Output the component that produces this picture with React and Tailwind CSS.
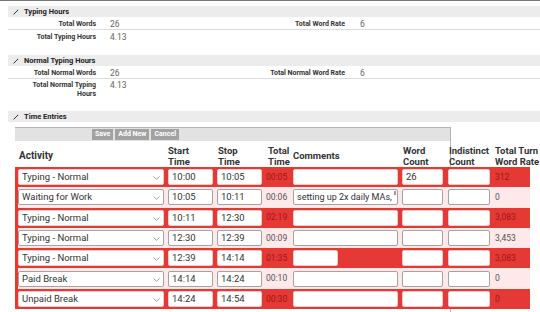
import React from 'react';

const font = { fontFamily: 'Roboto, "Liberation Sans", sans-serif' };

const entries = [
  { act: 'Typing - Normal', start: '10:00', stop: '10:05', total: '00:05', comment: '', word: '26', ind: '', rate: '312', hot: true },
  { act: 'Waiting for Work', start: '10:05', stop: '10:11', total: '00:06', comment: 'setting up 2x daily MAs,', word: '', ind: '', rate: '0', hot: false, grip: true },
  { act: 'Typing - Normal', start: '10:11', stop: '12:30', total: '02:19', comment: '', word: '', ind: '', rate: '3,083', hot: true },
  { act: 'Typing - Normal', start: '12:30', stop: '12:39', total: '00:09', comment: '', word: '', ind: '', rate: '3,453', hot: false },
  { act: 'Typing - Normal', start: '12:39', stop: '14:14', total: '01:35', comment: '', word: '', ind: '', rate: '3,083', hot: true, shortComment: true },
  { act: 'Paid Break', start: '14:14', stop: '14:24', total: '00:10', comment: '', word: '', ind: '', rate: '0', hot: false },
  { act: 'Unpaid Break', start: '14:24', stop: '14:54', total: '00:30', comment: '', word: '', ind: '', rate: '0', hot: true },
];

function Pencil() {
  return (
    <svg width="6" height="6" viewBox="0 0 6 6" className="shrink-0">
      <path d="M0.8 5.2 L4.6 1.4" stroke="#333" strokeWidth="1" strokeLinecap="round" />
      <path d="M4.2 1.2 L5 0.6 L5.4 1 L4.8 1.8 Z" fill="#333" />
    </svg>
  );
}

function SectionHeader({ title }) {
  return (
    <div className="ml-[8px] h-[11px] bg-[#ececec] flex items-center gap-[5px] pl-[5px]">
      <Pencil />
      <span className="text-[7.5px] font-bold text-[#222] leading-none">{title}</span>
    </div>
  );
}

function InfoRow({ label1, value1, label2, value2, line, tall }) {
  return (
    <div className={`ml-[8px] flex items-start ${line ? 'border-b border-[#dcdcdc]' : ''} ${tall ? 'pt-[2px] h-[21px]' : 'pt-[3px] h-[13px]'}`}>
      <div className="w-[88px] shrink-0 pl-[20px] text-right text-[7px] font-bold text-[#333] leading-[9px]">{label1}</div>
      <div className="w-[137px] shrink-0 pl-[14px] text-[8.5px] text-[#666] leading-[9px]">{value1}</div>
      <div className="w-[112px] shrink-0 text-right text-[7px] font-bold text-[#333] leading-[9px]">{label2}</div>
      <div className="pl-[15px] text-[8.5px] text-[#666] leading-[9px]">{value2}</div>
    </div>
  );
}

function Box({ w, value, hot, ml, children }) {
  return (
    <div
      className={`relative shrink-0 h-[16px] bg-white rounded-[2px] border ${hot ? 'border-[#f6c9c9]' : 'border-[#a3a3a3]'} flex items-center px-[3px] text-[9.5px] text-[#333] whitespace-nowrap overflow-hidden ${w} ${ml}`}
    >
      {value}
      {children}
    </div>
  );
}

function Row({ e }) {
  const hot = e.hot;
  return (
    <div className={`h-[20.3px] flex items-center border-l-[3px] border-[#e53935] ${hot ? 'bg-[#e53935]' : 'bg-[#fde8ea]'}`}>
      <Box w="w-[146px]" value={e.act} hot={hot} ml="ml-0">
        <svg width="7" height="4" viewBox="0 0 7 4" className="absolute right-[3px] top-[6px]">
          <path d="M0.5 0.5 L3.5 3.3 L6.5 0.5" fill="none" stroke="#888" strokeWidth="0.8" />
        </svg>
      </Box>
      <Box w="w-[45px]" value={e.start} hot={hot} ml="ml-[4px]" />
      <Box w="w-[45px]" value={e.stop} hot={hot} ml="ml-[4px]" />
      <div className={`w-[26px] shrink-0 ml-[4px] text-[8.5px] ${hot ? 'text-[#9e1818]' : 'text-[#555]'}`}>{e.total}</div>
      {e.shortComment ? (
        <div className="w-[105px] shrink-0 ml-[1px]">
          <Box w="w-[45px]" value="" hot={hot} ml="ml-0" />
        </div>
      ) : (
        <Box w="w-[105px]" value={<span className="text-[9px]">{e.comment}</span>} hot={hot} ml="ml-[1px]">
          {e.grip && <div className="absolute right-[1px] top-[1px] w-[2px] h-[4px] bg-[#999]" />}
        </Box>
      )}
      <Box w="w-[41px]" value={e.word} hot={hot} ml="ml-[4px]" />
      <Box w="w-[42px]" value={e.ind} hot={hot} ml="ml-[5px]" />
      <div className={`ml-[5px] text-[8.5px] ${hot ? 'text-[#9e1818]' : 'text-[#555]'}`}>{e.rate}</div>
    </div>
  );
}

function HeadCell({ lines, w }) {
  return (
    <div className={`${w} shrink-0 text-[9.5px] font-bold text-[#333] leading-[11px] whitespace-nowrap`}>
      {lines.map((l) => (
        <div key={l}>{l}</div>
      ))}
    </div>
  );
}

export default function App() {
  return (
    <div className="w-[540px] h-[312px] overflow-hidden bg-white" style={font}>
      <div className="h-[1px] bg-[#777]" />

      <div className="mt-[5px]">
        <SectionHeader title="Typing Hours" />
        <InfoRow label1="Total Words" value1="26" label2="Total Word Rate" value2="6" line />
        <InfoRow label1="Total Typing Hours" value1="4.13" />
      </div>

      <div className="mt-[12px]">
        <SectionHeader title="Normal Typing Hours" />
        <InfoRow label1="Total Normal Words" value1="26" label2="Total Normal Word Rate" value2="6" line />
        <InfoRow label1="Total Normal Typing Hours" value1="4.13" tall />
      </div>

      <div className="mt-[11px]">
        <SectionHeader title="Time Entries" />
      </div>

      <div className="mt-[5px] ml-[15px] w-[436px] h-[200px] border-t border-r border-[#b5b5b5]">
        <div className="h-[13px] bg-[#e2e2e2] flex items-center gap-[2px] pl-[77px]">
          <button className="h-[11px] px-[3px] bg-[#a2a2a2] text-white text-[7px] font-bold leading-none">Save</button>
          <button className="h-[11px] px-[3px] bg-[#a2a2a2] text-white text-[7px] font-bold leading-none">Add New</button>
          <button className="h-[11px] px-[3px] bg-[#a2a2a2] text-white text-[7px] font-bold leading-none">Cancel</button>
        </div>

        <div className="w-[515px] mt-[3px]">
          <div className="h-[23px] flex items-center">
            <div className="w-[153px] shrink-0 pl-[4px] text-[10px] font-bold text-[#333]">Activity</div>
            <HeadCell lines={['Start', 'Time']} w="w-[50px]" />
            <HeadCell lines={['Stop', 'Time']} w="w-[50px]" />
            <HeadCell lines={['Total', 'Time']} w="w-[25px]" />
            <HeadCell lines={['Comments']} w="w-[110px]" />
            <HeadCell lines={['Word', 'Count']} w="w-[46px]" />
            <HeadCell lines={['Indistinct', 'Count']} w="w-[46px]" />
            <HeadCell lines={['Total Turn', 'Word Rate']} w="w-[60px]" />
          </div>
          {entries.map((e, i) => (
            <Row key={i} e={e} />
          ))}
        </div>
      </div>
    </div>
  );
}
